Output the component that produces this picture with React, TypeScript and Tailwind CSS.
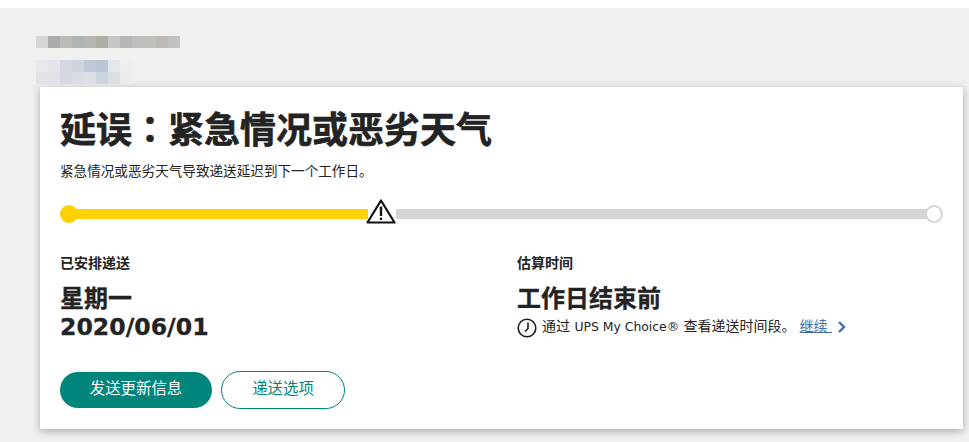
const cjk = "font-['DejaVu_Sans','Noto_Sans_CJK_SC',sans-serif]";

const blurTop = ["#d6d5d5", "#acaba9", "#bcbbb5", "#afb4b4", "#b9b5b0", "#aeaca7", "#c5c7c7", "#b5b7b5", "#c0bebb", "#c0bebb", "#bcb9b5", "#bfc3c2"];
const blurRowA = ["#e8e9ec", "#e4e5ea", "#d3d7e1", "#d1d4de", "#bfc8d8", "#bcc5d6", "#e4e7ec", "#eeeeee"];
const blurRowB = ["#e0e2e8", "#e0e2e9", "#d5d8e2", "#dadde3", "#dcdfe4", "#ccd3df", "#dadee5", "#ebecec"];

function Blur({ colors }: { colors: string[] }) {
    return (
        <div className="flex">
            {colors.map((c, i) => (
                <div key={i} className="w-3 h-3" style={{ backgroundColor: c }} />
            ))}
        </div>
    );
}

function WarningIcon() {
    return (
        <svg width="30" height="25" viewBox="0 0 30 25" className="shrink-0 -ml-[2px] mb-[4px]">
            <path d="M15 1.5 L28.5 23.5 L1.5 23.5 Z" fill="#fff" stroke="#111" strokeWidth="2.2" strokeLinejoin="round" />
            <path d="M15 7.5 V17" stroke="#111" strokeWidth="2.4" />
            <path d="M15 18.6 V21" stroke="#111" strokeWidth="2.4" />
        </svg>
    );
}

function ClockIcon() {
    return (
        <svg width="20" height="20" viewBox="0 0 20 20" className="shrink-0 mt-[3px]">
            <circle cx="10" cy="10" r="8.8" fill="none" stroke="#1b1b1b" strokeWidth="1.6" />
            <path d="M11 4.5 V10.5 L8 13.5" fill="none" stroke="#1b1b1b" strokeWidth="1.6" />
        </svg>
    );
}

export default function App() {
    return (
        <div className={`h-[442px] w-[969px] overflow-hidden bg-white pt-2 text-[#232323] ${cjk}`}>
            <div className="h-[434px] bg-[#f0f0ee] pl-[36px] pt-[28px]">
                <Blur colors={blurTop} />
                <div className="mt-3">
                    <Blur colors={blurRowA} />
                    <Blur colors={blurRowB} />
                </div>

                {/* Card */}
                <div className="mt-[3px] ml-1 w-[923px] h-[342px] bg-white pl-5 pr-5 pt-[22px] shadow-[0_2px_8px_rgba(0,0,0,0.3)]">
                    <h1 className="h-[44px] text-[36px] leading-[44px] font-bold [-webkit-text-stroke:0.6px_#232323]">
                        延误<span className="font-['Noto_Sans_CJK_TC'] leading-[0]">：</span>紧急情况或恶劣天气
                    </h1>
                    <p className="mt-[8px] text-[13.6px] leading-[20px]">紧急情况或恶劣天气导致递送延迟到下一个工作日。</p>

                    {/* Progress */}
                    <div className="mt-[20px] flex items-center h-[25px]">
                        <div className="w-[18px] h-[18px] rounded-full bg-[#ffd100] shrink-0" />
                        <div className="w-[294px] h-[10px] -ml-1 bg-[#ffd100]" />
                        <WarningIcon />
                        <div className="flex-1 h-[10px] bg-[#d4d4d4]" />
                        <div className="w-[18px] h-[18px] -ml-1 rounded-full bg-white border-2 border-[#d4d4d4] shrink-0" />
                    </div>

                    {/* Details */}
                    <div className="mt-[27px] flex">
                        <div className="w-[457px]">
                            <div className="text-[14px] leading-[20px] font-semibold">已安排递送</div>
                            <div className="mt-[12px] text-[24px] leading-[28px] font-bold [-webkit-text-stroke:0.3px_#232323]">
                                星期一
                                <br />
                                <span className="text-[23.6px]">2020/06/01</span>
                            </div>
                        </div>
                        <div>
                            <div className="text-[14px] leading-[20px] font-semibold">估算时间</div>
                            <div className="mt-[12px] text-[24px] leading-[28px] font-bold [-webkit-text-stroke:0.3px_#232323]">工作日结束前</div>
                            <div className="mt-[2px] flex text-[14px] leading-[22px]">
                                <ClockIcon />
                                <span className="ml-[5px] whitespace-pre">
                                    通过 <span className="text-[12.4px]">UPS My Choice®</span> 查看递送时间段。
                                </span>
                                <a className="ml-[4px] text-[#426da9] underline whitespace-pre">继续 </a>
                                <svg width="10" height="12" viewBox="0 0 10 12" className="ml-[5px] mt-[6px]">
                                    <path d="M2 1 L7 6 L2 11" fill="none" stroke="#426da9" strokeWidth="2.4" />
                                </svg>
                            </div>
                        </div>
                    </div>

                    {/* Buttons */}
                    <div className="mt-[30px] flex items-center gap-[9px]">
                        <button className="w-[152px] h-9 rounded-full bg-[#00857a] text-white text-[15.4px]">发送更新信息</button>
                        <button className="w-[124px] h-[38px] rounded-full border border-[#00857a] text-[#00857a] text-[15.4px]">递送选项</button>
                    </div>
                </div>
            </div>
        </div>
    );
}
